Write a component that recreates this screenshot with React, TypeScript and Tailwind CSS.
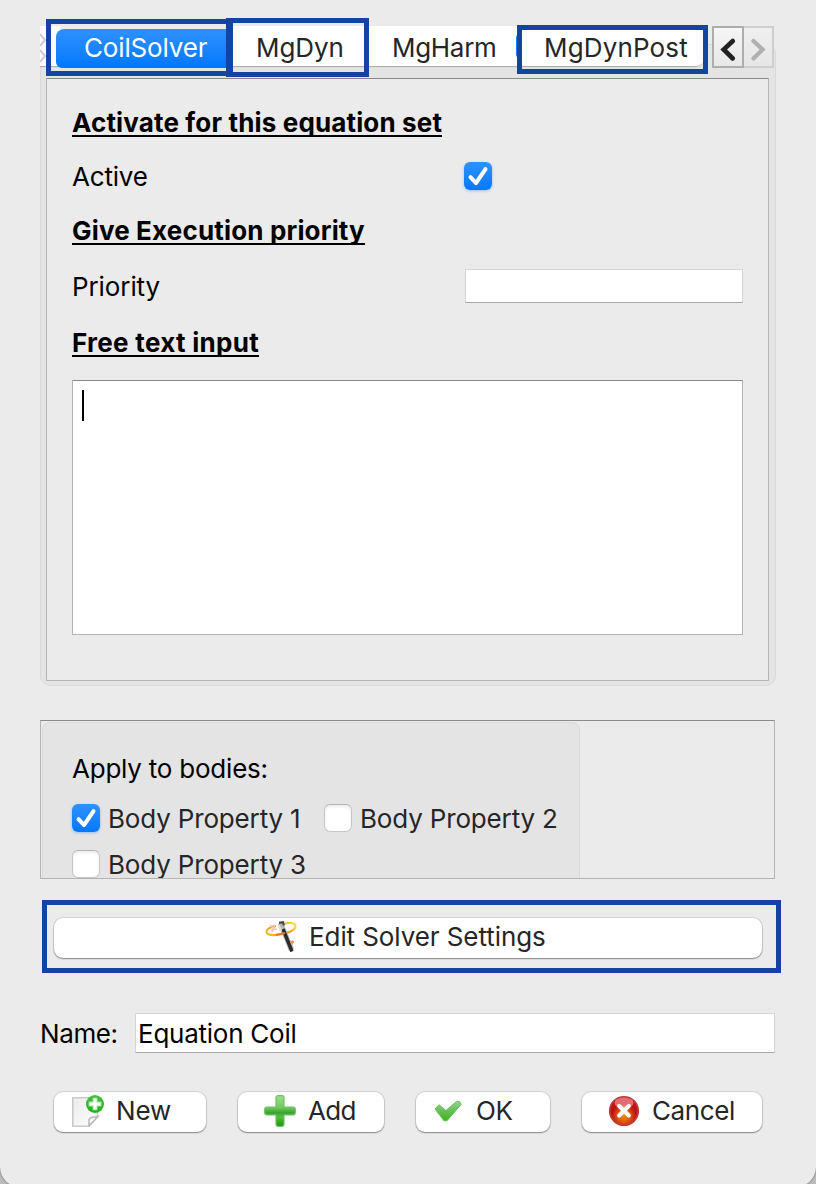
import type { ReactNode } from "react";

function CheckMark() {
  return (
    <svg viewBox="0 0 28 28" className="size-7" fill="none">
      <path d="M6.5 15.2 L12 21 L21.5 7.2" stroke="#fff" strokeWidth="4" strokeLinecap="round" strokeLinejoin="round" />
    </svg>
  );
}

function Checkbox({ checked = false }: { checked?: boolean }) {
  return checked ? (
    <span className="block size-7 shrink-0 rounded-[6px] bg-linear-to-b from-[#2d92ff] to-[#0377ff] shadow-[0_1px_3px_rgba(0,110,255,0.35)]">
      <CheckMark />
    </span>
  ) : (
    <span className="block size-7 shrink-0 rounded-[6px] border border-[#c6c6c6] border-t-[#b4b4b4] bg-white shadow-[inset_0_2px_3px_rgba(0,0,0,0.08)]" />
  );
}

function BodyOption({ label, checked }: { label: string; checked?: boolean }) {
  return (
    <label className="flex h-7 items-center gap-2 text-[#262626]">
      <Checkbox checked={checked} />
      <span className="relative top-px tracking-[-0.16px]">{label}</span>
    </label>
  );
}

function PushButton({ className, children }: { className: string; children: ReactNode }) {
  return (
    <button
      className={`flex items-center rounded-[9px] bg-white pb-[2px] text-[#262626] shadow-[0_0_0_1px_rgba(0,0,0,0.09),0_1px_1.5px_rgba(0,0,0,0.38)] ${className}`}
    >
      {children}
    </button>
  );
}

function Heading({ className, children }: { className: string; children: string }) {
  return (
    <h2 className="flex h-[30px] items-center font-bold">
      <span className={`relative h-[30px] border-b-2 border-black leading-[32px] ${className}`}>{children}</span>
    </h2>
  );
}

function WandIcon() {
  return (
    <svg viewBox="0 0 32 32" className="size-8" fill="none">
      <defs>
        <linearGradient id="ring" x1="0" y1="0.6" x2="1" y2="0.2">
          <stop offset="0" stopColor="#f6b52c" />
          <stop offset="0.5" stopColor="#f08a22" />
          <stop offset="1" stopColor="#ffdf35" />
        </linearGradient>
      </defs>
      <path d="M20 2.5 C27 0.5 32 3 30 7 C27 12 9 16 3 13 C-1 10 4 6 11 5" stroke="url(#ring)" strokeWidth="2.2" />
      <path d="M5 4 L9 8 M10 4 L7 11 M6 9 L12 8" stroke="#f7c3aa" strokeWidth="1.6" />
      <path d="M15.5 2 L26.5 29" stroke="#b5b5b5" strokeWidth="5.4" />
      <path d="M18 8 L27 30.5" stroke="#2c2c2c" strokeWidth="3.4" />
      <path d="M14 1.8 L18 1.2 L19 4.5" stroke="#444" strokeWidth="2.2" />
      <path d="M13.5 4.5 L16 10" stroke="#dedede" strokeWidth="2.6" />
      <path d="M11 14 L20 12" stroke="#ee7b20" strokeWidth="2.2" />
      <path d="M25 21 h4 M27 19.5 v4" stroke="#ee9568" strokeWidth="2" />
    </svg>
  );
}

function NewIcon() {
  return (
    <svg viewBox="0 0 32 32" className="size-8" fill="none">
      <defs>
        <linearGradient id="sheet" x1="0" y1="0" x2="1" y2="1">
          <stop offset="0" stopColor="#ececec" />
          <stop offset="1" stopColor="#fdfdfd" />
        </linearGradient>
        <linearGradient id="badge" x1="0" y1="0" x2="0" y2="1">
          <stop offset="0" stopColor="#43c046" />
          <stop offset="1" stopColor="#19b414" />
        </linearGradient>
      </defs>
      <path d="M0.8 2.8 H25.5 V21 L17 31.2 H0.8 Z" fill="url(#sheet)" stroke="#c9c9c9" strokeWidth="1.6" />
      <path d="M17 31 V24.5 L19 22.5 L26 21.5 Z" fill="#f7f7f7" stroke="#b8b8b8" strokeWidth="1.5" />
      <circle cx="23" cy="9" r="9" fill="url(#badge)" />
      <path d="M16.5 9 H29.5 M23 2.8 V15.2" stroke="#a4df9a" strokeWidth="5" />
      <path d="M17.5 9 H28.5 M23 3.5 V14.5" stroke="#fff" strokeWidth="3" />
    </svg>
  );
}

function AddIcon() {
  return (
    <svg viewBox="0 0 32 32" className="size-8">
      <defs>
        <linearGradient id="plus" x1="0" y1="0" x2="0" y2="1">
          <stop offset="0" stopColor="#a3dc94" />
          <stop offset="0.4" stopColor="#6cc957" />
          <stop offset="0.55" stopColor="#3ca333" />
          <stop offset="0.7" stopColor="#51be3b" />
          <stop offset="1" stopColor="#1f9310" />
        </linearGradient>
      </defs>
      <path
        d="M14 0.7 H18 Q20 0.7 20 3 V12 H29 Q31.3 12 31.3 14.5 V17.5 Q31.3 20 29 20 H20 V29 Q20 31.3 18 31.3 H14 Q12 31.3 12 29 V20 H3 Q0.7 20 0.7 17.5 V14.5 Q0.7 12 3 12 H12 V3 Q12 0.7 14 0.7 Z"
        fill="url(#plus)"
        stroke="#6fc262"
        strokeWidth="1.2"
      />
    </svg>
  );
}

function OkIcon() {
  return (
    <svg viewBox="0 0 28 22" className="h-[22px] w-7">
      <defs>
        <linearGradient id="tick" x1="0" y1="0" x2="0" y2="1">
          <stop offset="0" stopColor="#92d78a" />
          <stop offset="0.5" stopColor="#66bf5a" />
          <stop offset="1" stopColor="#39b80b" />
        </linearGradient>
      </defs>
      <path
        d="M1 9 L5 4.8 L12 10.5 L22.5 1.5 Q26.5 0.5 27 4.5 L13 20.8 H10 Z"
        fill="url(#tick)"
        stroke="#66bc57"
        strokeWidth="1"
        strokeLinejoin="round"
      />
    </svg>
  );
}

function CancelIcon() {
  return (
    <svg viewBox="0 0 32 32" className="size-8">
      <defs>
        <radialGradient id="ball" cx="0.5" cy="0.68" r="0.5">
          <stop offset="0" stopColor="#ef8d0c" />
          <stop offset="0.45" stopColor="#db5610" />
          <stop offset="0.85" stopColor="#bd1514" />
        </radialGradient>
      </defs>
      <circle cx="16" cy="16" r="14.2" fill="url(#ball)" stroke="#c43a3c" strokeWidth="1.8" />
      <ellipse cx="16" cy="8" rx="9.5" ry="5.6" fill="#ee8d91" opacity="0.75" />
      <path d="M11.2 11 L20.8 20.6 M20.8 11 L11.2 20.6" stroke="#fff" strokeWidth="4.2" strokeLinecap="round" />
    </svg>
  );
}

function Highlight({ className }: { className: string }) {
  return <div className={`pointer-events-none absolute border-[5px] border-[#1443a4] ${className}`} />;
}

function TabBar() {
  return (
    <div className="relative col-start-1 row-start-1 flex h-[42px]">
      <div className="flex h-[42px] w-[664px] overflow-hidden rounded-br-[9px] border-b border-[#dcdcdc] text-[#262626]">
        <div className="flex h-[41px] w-full overflow-hidden rounded-br-[8px] border-b border-[#b0b0b0] bg-white">
          <svg viewBox="0 0 16 40" className="h-10 w-4 shrink-0" fill="none" stroke="#c6c6c6" strokeWidth="1.8">
            <path d="M0 8 L5 14 L0 20 M0 24 L5 30 L0 36" />
          </svg>
          <div className="w-[172px] shrink-0" />
          <div className="w-[141px] shrink-0 pl-[28px] leading-[43px] tracking-[-0.1px]">MgDyn</div>
          <div className="w-[147px] shrink-0 pl-[23px] leading-[43px] tracking-[-0.3px]">MgHarm</div>
          <div className="flex shrink-0">
            <div className="mt-[8px] h-[24px] w-1 rounded-l-[4px] bg-[#1683ff]" />
            <div className="pl-[24px] leading-[43px] tracking-[0.15px]">MgDynPost</div>
          </div>
        </div>
      </div>
      <div className="ml-2 flex">
        <div className="flex w-8 items-center justify-center border-2 border-[#adadad] bg-linear-to-b from-[#f5f5f5] to-[#e8e8e8]">
          <svg viewBox="0 0 28 38" className="h-[38px] w-7" fill="none">
            <path d="M18.8 13 L9.7 21.5 L18.8 30.5" stroke="#222" strokeWidth="4.6" strokeLinecap="round" strokeLinejoin="miter" />
          </svg>
        </div>
        <div className="flex w-[30px] items-center justify-center border-2 border-l-0 border-[#cecece] bg-linear-to-b from-[#efefef] to-[#e6e6e6]">
          <svg viewBox="0 0 28 38" className="h-[38px] w-7" fill="none">
            <path d="M9.5 13 L18.6 21.5 L9.5 30.5" stroke="#b0b0b0" strokeWidth="4.2" strokeLinecap="round" />
          </svg>
        </div>
      </div>
      <div className="absolute top-[-2px] left-5 h-[5px] w-[168px] bg-[#ebebeb]" />
      <div className="absolute top-[3px] left-4 h-[39px] w-[172px] rounded-tl-[8px] rounded-bl-[6px] bg-linear-to-b from-[#2d91ff] to-[#0077ff] pl-7 leading-[38px] tracking-[-0.15px] text-white">
        CoilSolver
      </div>
      <Highlight className="top-[-7px] left-[6px] h-[57px] w-[187px]" />
      <Highlight className="top-[-8px] left-[186px] h-[59px] w-[143px] border-l-[7px]" />
      <Highlight className="top-[-1px] left-[477px] h-[49px] w-[191px]" />
    </div>
  );
}

function SolverPanel() {
  return (
    <div className="col-start-1 row-start-1 mt-[18px] h-[642px] w-[736px] rounded-[10px] border border-[#d9d9d9] bg-[#e4e4e4] px-[5px] pt-[33px] pb-1">
      <div className="h-[603px] w-[723px] border border-[#b4b4b4] border-t-[#8a8a8a] bg-[#ebebeb] pl-[25px]">
        <div className="pt-[28px]">
          <Heading className="tracking-[0.15px]">Activate for this equation set</Heading>
        </div>
        <div className="mt-[25px] flex h-7 items-center">
          <span className="relative top-px w-[392px] tracking-[-0.2px]">Active</span>
          <Checkbox checked />
        </div>
        <div className="mt-[25px]">
          <Heading className="tracking-[0.16px]">Give Execution priority</Heading>
        </div>
        <div className="mt-[24px] flex h-[34px] items-center">
          <span className="relative top-px w-[393px] tracking-[-0.1px]">Priority</span>
          <div className="h-[34px] w-[278px] border border-[#d6d6d6] border-b-[#a9a9a9] bg-white" />
        </div>
        <div className="mt-[24px]">
          <Heading className="tracking-[0.3px]">Free text input</Heading>
        </div>
        <div className="mt-[23px] h-[255px] w-[671px] border border-[#b4b4b4] border-t-[#8a8a8a] bg-white pt-[9px] pl-[9px]">
          <div className="h-[31px] w-[2px] bg-black" />
        </div>
      </div>
    </div>
  );
}

export default function App() {
  return (
    <div className="h-[1184px] w-[816px] overflow-hidden bg-[#bcbcbc] font-['Inter',sans-serif] text-[26px] leading-[30px] whitespace-nowrap text-black">
      <div className="h-[1187px] rounded-b-[20px] bg-[#ebebeb] pt-[26px] pl-10 shadow-[0_0_2px_rgba(0,0,0,0.6)]">
        <div className="grid h-[660px] w-[736px] grid-cols-1 grid-rows-1">
          <SolverPanel />
          <TabBar />
        </div>

        <div className="mt-[34px] h-[159px] w-[735px] overflow-hidden border border-[#b4b4b4] border-t-[#8a8a8a] px-px pt-px">
          <div className="h-[200px] w-[538px] rounded-[8px] border border-[#dadada] bg-[#e4e4e4] pt-[31px] pl-[29px]">
            <div className="tracking-[-0.22px]">Apply to bodies:</div>
            <div className="mt-[20px] grid grid-cols-[252px_1fr] gap-y-[18px]">
              <BodyOption label="Body Property 1" checked />
              <BodyOption label="Body Property 2" />
              <BodyOption label="Body Property 3" />
            </div>
          </div>
        </div>

        <div className="mt-[21px] ml-[2px] h-[73px] w-[739px] border-[5px] border-[#1443a4] pt-[13px] pl-[7px]">
          <PushButton className="h-10 w-[708px] pl-[211px]">
            <WandIcon />
            <span className="ml-[12px] tracking-[-0.08px]">Edit Solver Settings</span>
          </PushButton>
        </div>

        <div className="mt-10 flex h-10 items-center">
          <span className="relative top-px w-[95px] tracking-[-0.4px]">Name:</span>
          <div className="h-10 w-[640px] border border-[#d6d6d6] border-b-[#a9a9a9] bg-white pl-[2px] leading-[40px] tracking-[-0.25px]">Equation Coil</div>
        </div>

        <div className="mt-[39px] ml-[14px] flex">
          <PushButton className="h-10 w-[152px] pl-[18px]">
            <NewIcon />
            <span className="ml-[12px] tracking-[-0.1px]">New</span>
          </PushButton>
          <PushButton className="ml-8 h-10 w-[146px] pl-[26px]">
            <AddIcon />
            <span className="ml-[12px] tracking-[-0.7px]">Add</span>
          </PushButton>
          <PushButton className="ml-8 h-10 w-[134px] pl-[18px]">
            <OkIcon />
            <span className="ml-[14px] tracking-[-0.3px]">OK</span>
          </PushButton>
          <PushButton className="ml-8 h-10 w-[180px] pl-[26px]">
            <CancelIcon />
            <span className="ml-[12px] tracking-[-0.4px]">Cancel</span>
          </PushButton>
        </div>
      </div>
    </div>
  );
}
